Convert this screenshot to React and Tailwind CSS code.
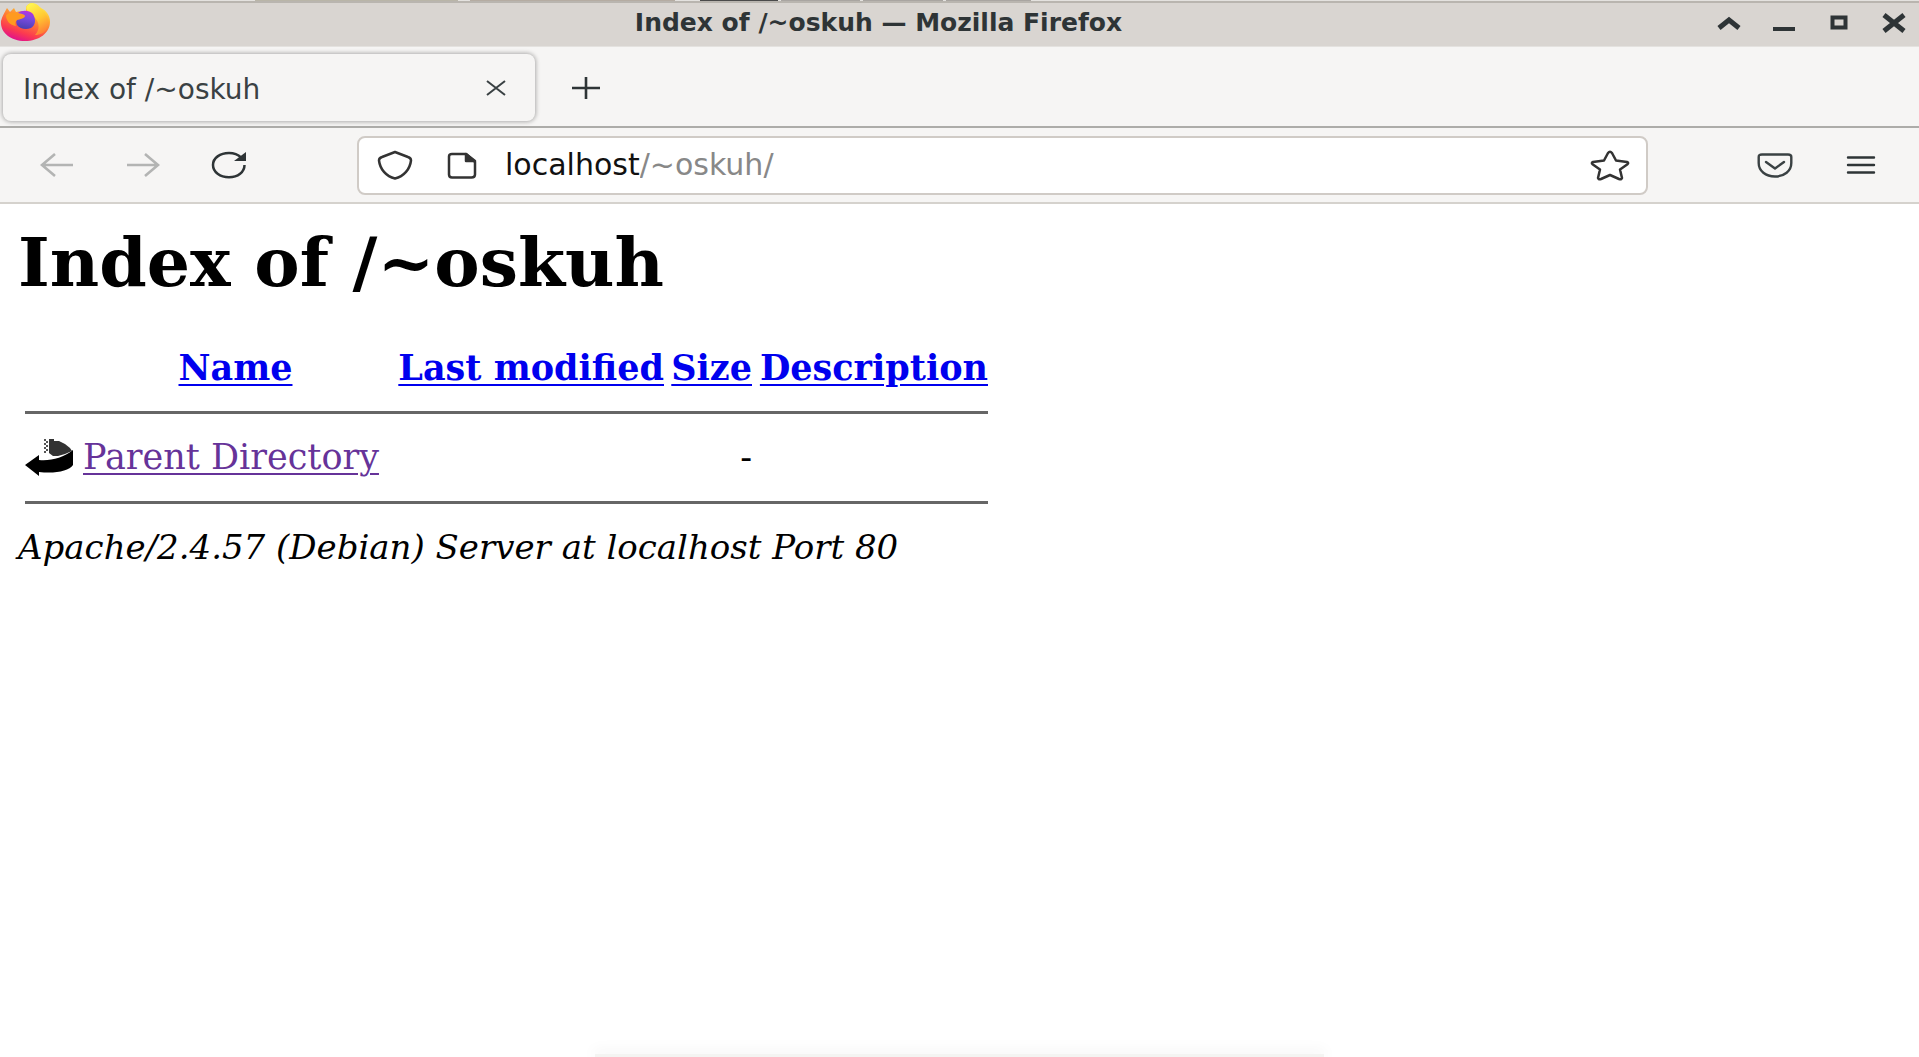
const sans = "font-['DejaVu_Sans',sans-serif]";
const serif = "font-['DejaVu_Serif',serif]";

function FirefoxLogo() {
  return (
    <svg className="h-[38px] w-[50px] shrink-0" viewBox="0 0 50 38" preserveAspectRatio="none" aria-hidden="true">
      <defs>
        <linearGradient id="fox" x1="0.85" y1="0.05" x2="0.4" y2="1">
          <stop offset="0" stopColor="#fff44f" />
          <stop offset="0.3" stopColor="#ffb02e" />
          <stop offset="0.55" stopColor="#ff7139" />
          <stop offset="0.8" stopColor="#fb3a50" />
          <stop offset="1" stopColor="#e31587" />
        </linearGradient>
        <linearGradient id="globe" x1="0.6" y1="0" x2="0.4" y2="1">
          <stop offset="0" stopColor="#b833e1" />
          <stop offset="0.4" stopColor="#7a4be0" />
          <stop offset="1" stopColor="#4a3fb0" />
        </linearGradient>
        <linearGradient id="tail" x1="0.3" y1="0" x2="0.7" y2="1">
          <stop offset="0" stopColor="#fff44f" />
          <stop offset="0.5" stopColor="#ffc931" />
          <stop offset="1" stopColor="#ff7a35" />
        </linearGradient>
      </defs>
      <path d="M1 18C2 13 5 9 7 5l3 4 4-4 2 4c3-1 6-1 10-1l0-4c1-2 3-4 6-4 4 0 7 3 9 5 6 3 9 8 9 14 0 11-11 19-25 19S0 30 1 18z" fill="url(#fox)" />
      <path d="M27 7c-2-3 1-7 6-7 2 2 5 4 8 6 6 5 9 12 6 19-2 5-7 7-12 7 5-5 5-13-1-18-3-2-6-4-7-7z" fill="url(#tail)" />
      <path d="M18 10c4-3 11-3 15 1 3 5 3 11-2 14-5 2-11 1-14-3-1-3-1-4 0-6l7-2c2-1 1-3-6-4z" fill="url(#globe)" />
      <path d="M6 12c3-3 7-3 11-2 2 2 6 2 8 3-1 3-5 3-8 4-2 2-2 4-1 6C10 22 6 18 6 12z" fill="#ff9a1f" />
    </svg>
  );
}

function TopStrip() {
  return (
    <div className="h-[3px] shrink-0 border-b-2 border-[#b9b5af] bg-[#e4e2df]">
      <div className="flex h-px">
        <div className="ml-[255px] w-[203px] bg-[#b9b5a8]" />
        <div className="ml-3 w-[205px] bg-[#b5aca2]" />
        <div className="ml-[25px] w-[78px] bg-[#4b4b4b]" />
        <div className="ml-[3px] w-[79px] bg-[#a9a5a1]" />
        <div className="ml-[3px] w-20 bg-[#a9a5a1]" />
        <div className="ml-[3px] w-[85px] bg-[#a9a5a1]" />
      </div>
    </div>
  );
}

function TitleBar() {
  const btn = "flex h-10 w-[55px] items-center justify-center text-[#2e3436]";
  return (
    <header className="grid h-11 grid-cols-[1fr_auto_1fr] items-start border-b border-[#e4e2df] bg-[#d9d5d1]">
      <FirefoxLogo />
      <h1 className={`${sans} mr-[162px] text-[25px] leading-[39px] font-bold text-[#2e3436]`}>Index of /~oskuh — Mozilla Firefox</h1>
      <div className="-mr-[2px] flex justify-end">
        <button className={btn} aria-label="Shade">
          <svg className="h-[20px] w-[24px]" viewBox="0 0 24 20" fill="none" stroke="currentColor" strokeWidth="5"><path d="M2 15l10-8 10 8" /></svg>
        </button>
        <button className={btn} aria-label="Minimize">
          <svg className="h-[20px] w-[24px]" viewBox="0 0 24 20"><path d="M1 14h22v4H1z" fill="currentColor" /></svg>
        </button>
        <button className={btn} aria-label="Maximize">
          <svg className="h-[20px] w-[24px]" viewBox="0 0 24 20" fill="none" stroke="currentColor" strokeWidth="4"><path d="M5.500 4.500h13v10h-13z" /></svg>
        </button>
        <button className={btn} aria-label="Close">
          <svg className="h-[20px] w-[24px]" viewBox="0 0 24 20" fill="none" stroke="currentColor" strokeWidth="5"><path d="M2 2l20 16M22 2L2 18" /></svg>
        </button>
      </div>
    </header>
  );
}

function TabStrip() {
  return (
    <div className="flex h-[81px] items-start border-b-2 border-[#adaca9] bg-[#f6f5f4] pt-[7px] pl-[3px]">
      <div className="flex h-[67px] w-[532px] items-center rounded-lg bg-[#f6f5f4] pr-5 pl-5 shadow-[0_0_4px_1px_rgba(0,0,0,0.3)]">
        <span className={`${sans} grow pt-1 text-[28px] leading-8 text-[#3a4143]`}>Index of /~oskuh</span>
        <button className="flex h-8 w-[38px] items-center justify-center text-[#3a4143]" aria-label="Close tab">
          <svg className="h-4 w-[22px]" viewBox="0 0 22 16" fill="none" stroke="currentColor" strokeWidth="2"><path d="M2 1l18 14M20 1L2 15" /></svg>
        </button>
      </div>
      <button className="ml-[31px] flex h-[68px] w-10 items-center justify-center text-[#2e3436]" aria-label="New tab">
        <svg className="h-[24px] w-[30px]" viewBox="0 0 30 24" fill="none" stroke="currentColor" strokeWidth="2.6"><path d="M1 12h28M15 1v22" /></svg>
      </button>
    </div>
  );
}

function NavBar() {
  const btn = "flex h-12 w-[86px] items-center justify-center";
  return (
    <nav className="flex h-[76px] items-center border-b-2 border-[#d5d2cd] bg-[#f6f5f4] pl-[14px]">
      <button className={`${btn} text-[#b3b4b3]`} aria-label="Back">
        <svg className="h-[24px] w-[34px]" viewBox="0 0 34 24" fill="none" stroke="currentColor" strokeWidth="2.6"><path d="M33 12H2M15 1L2 12l13 11" /></svg>
      </button>
      <button className={`${btn} text-[#b3b4b3]`} aria-label="Forward">
        <svg className="h-[24px] w-[34px]" viewBox="0 0 34 24" fill="none" stroke="currentColor" strokeWidth="2.6"><path d="M1 12h31M19 1l13 11-13 11" /></svg>
      </button>
      <button className={`${btn} text-[#2e3436]`} aria-label="Reload">
        <svg className="h-[28px] w-[36px]" viewBox="0 0 36 28" fill="none" stroke="currentColor" strokeWidth="2.5">
          <path d="M33.500 14C33.500 21 27 26.300 18 26.300S2 21 2 14 9 2 18 2c5 0 9 1.500 12 4.500" />
          <path d="M35 1v9H23z" fill="currentColor" stroke="none" />
        </svg>
      </button>
      <div className="ml-[85px] flex h-[59px] grow items-center rounded-lg border-2 border-[#d0cbc6] bg-white">
        <button className="ml-[18px] flex h-10 w-[36px] items-center justify-center text-[#333]" aria-label="Tracking protection">
          <svg className="h-[30px] w-[36px]" viewBox="0 0 36 30" fill="none" stroke="currentColor" strokeWidth="2.5" strokeLinejoin="round"><path d="M18 2L31 7Q34 8 34 10.500C33 19 27 26.500 18 28.500 9 26.500 3 19 2 10.500Q2 8 5 7z" /></svg>
        </button>
        <button className="ml-[34px] flex h-10 w-[30px] items-center justify-center text-[#333]" aria-label="Site information">
          <svg className="h-[27px] w-[30px]" viewBox="0 0 30 27" fill="none" stroke="currentColor" strokeWidth="2.5" strokeLinejoin="round">
            <path d="M5 2h14l9 8v12.500q0 3-3.500 3H5q-3 0-3-3V4.500Q2 2 5 2z" />
            <path d="M19 2v7h9z" fill="currentColor" />
          </svg>
        </button>
        <label htmlFor="address" className={`${sans} ml-[28px] text-[30px] leading-9 text-[#111]`}>localhost</label>
        <input id="address" type="text" defaultValue="/~oskuh/" className={`${sans} min-w-0 grow bg-transparent text-[30px] leading-9 text-[#888] outline-none`} />
        <button className="mr-[16px] flex h-10 w-[40px] items-center justify-center text-[#333]" aria-label="Bookmark this page">
          <svg className="h-[31px] w-[40px]" viewBox="0 0 40 31" fill="none" stroke="currentColor" strokeWidth="2.500" strokeLinejoin="round">
            <path d="M18 3q2-2.500 4 0l4 7.500 11 1.500q2 .8.500 2.200L30 19.500l2 8.500q-.5 2-3 1l-9-4-9 4q-2.500 1-3-1l2-8.500-7.500-5.300Q1 12.800 3 12l11-1.500z" />
          </svg>
        </button>
      </div>
      <div className="flex pr-[15px] pl-[84px]">
        <button className={`${btn} text-[#3a4143]`} aria-label="Save to Pocket">
          <svg className="h-[25px] w-[36px]" viewBox="0 0 36 25" fill="none" stroke="currentColor" strokeWidth="2.400" strokeLinecap="round" strokeLinejoin="round">
            <path d="M5 1.500h26q3.300 0 3.300 2.500v6c0 8-7 13.500-16.300 13.500S1.700 18 1.700 10V4Q1.700 1.500 5 1.500z" />
            <path d="M9 9l9 6.500L27 9" />
          </svg>
        </button>
        <button className={`${btn} text-[#2e3436]`} aria-label="Open application menu">
          <svg className="h-[20px] w-[30px]" viewBox="0 0 30 20" fill="none" stroke="currentColor" strokeWidth="2.400" strokeLinecap="round"><path d="M2 2.500h26M2 10h26M2 17.500h26" /></svg>
        </button>
      </div>
    </nav>
  );
}

function BackIcon() {
  return (
    <svg className="h-[37px] w-[49px]" viewBox="0 0 49 37" role="img" aria-label="Parent directory">
      <path d="M24 0h5v2h5l6 3 5 4 2 3-7 3-7 2h-5l-4-3z" fill="#333" />
      <path d="M19 1h2M21 3h2M19 5h2M21 7h2M19 9h2M21 11h2M19 13h2" stroke="#555" strokeWidth="2" />
      <path d="M0 26L14 16v5c12 1 24-2 34-10v15c-4 6-18 9-34 7v4z" fill="#000" />
    </svg>
  );
}

function Listing() {
  const blue = "text-[#0000ee] underline decoration-2 underline-offset-4";
  return (
    <main className={`${serif} grow px-[18px] pt-[20px] text-black`}>
      <h2 className="text-[68px] leading-[76px] font-bold">Index of /~oskuh</h2>
      <table className="mt-[48px] ml-[7px] w-[963px] table-fixed border-collapse text-[35px] leading-10">
        <colgroup>
          <col className="w-[58px]" />
          <col className="w-[305px]" />
          <col className="w-[276px]" />
          <col className="w-[88px]" />
          <col className="w-[236px]" />
        </colgroup>
        <thead>
          <tr className="h-[64px] border-b-3 border-[#666] align-top whitespace-nowrap">
            <td />
            <th className="p-0 text-center"><a href="#name" className={blue}>Name</a></th>
            <th className="p-0 text-right"><a href="#modified" className={blue}>Last modified</a></th>
            <th className="p-0 text-right"><a href="#size" className={blue}>Size</a></th>
            <th className="p-0 text-right"><a href="#description" className={blue}>Description</a></th>
          </tr>
        </thead>
        <tbody>
          <tr className="h-[90px] border-b-3 border-[#666] align-middle whitespace-nowrap">
            <td className="p-0"><BackIcon /></td>
            <td className="p-0"><a href="#parent" className="text-[#663399] underline decoration-2 underline-offset-4">Parent Directory</a></td>
            <td />
            <td className="p-0 text-right">-</td>
            <td />
          </tr>
        </tbody>
      </table>
      <address className="mt-[23px] text-[34px] leading-10 italic">Apache/2.4.57 (Debian) Server at localhost Port 80</address>
    </main>
  );
}

export default function App() {
  return (
    <div className="flex min-h-screen flex-col bg-white">
      <TopStrip />
      <TitleBar />
      <TabStrip />
      <NavBar />
      <Listing />
      <div className="mx-auto h-[3px] w-[38%] bg-[#f4f4f2] shadow-[0_-2px_14px_2px_rgba(0,0,0,0.05)]" />
    </div>
  );
}
